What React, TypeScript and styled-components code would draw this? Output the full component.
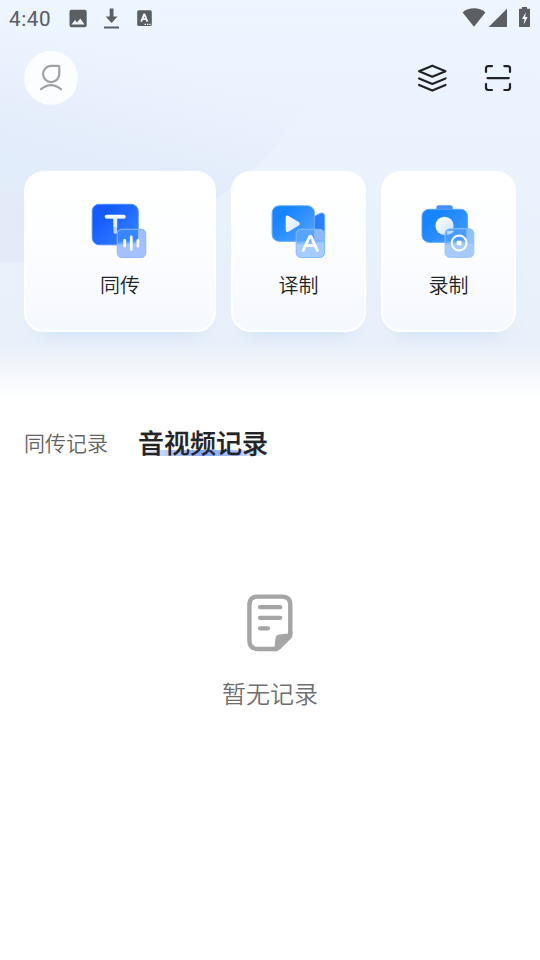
import React from 'react';
import styled, { createGlobalStyle } from 'styled-components';

const GlobalStyle = createGlobalStyle`
  * { box-sizing: border-box; }
  body { margin: 0; background: #fff; }
  svg { display: block; flex: none; }
`;

const Screen = styled.div`
  width: 540px;
  height: 960px;
  position: relative;
  isolation: isolate;
  overflow: hidden;
  display: flex;
  flex-direction: column;
  background: linear-gradient(#edf5ff 0, #ebf3fe 100px, #e9f1fb 250px, #e9f0fa 343px, #f0f4fa 362px, #f9fbfe 382px, #fff 402px);
  font-family: 'Noto Sans CJK SC', sans-serif;
`;

const Backdrop = styled.svg`
  position: absolute;
  top: 0;
  left: 0;
  z-index: -1;
`;

const StatusBar = styled.div`
  height: 36px;
  display: flex;
  justify-content: space-between;
  color: #5b5f64;
`;

const Clock = styled.span`
  width: 60px;
  padding-left: 9px;
  font: 400 20.6px/38px Roboto, sans-serif;
  letter-spacing: 0.6px;
  -webkit-text-stroke: 0.12px currentColor;
`;

const StatusGroup = styled.div`
  display: flex;
`;

const Header = styled.header`
  height: 54px;
  margin-top: 15px;
  padding: 0 24px;
  display: flex;
  align-items: center;
  justify-content: space-between;
`;

const Avatar = styled.div`
  width: 54px;
  height: 54px;
  border-radius: 50%;
  background: rgba(255, 255, 255, 0.82);
`;

const HeaderActions = styled.div`
  display: flex;
  gap: 30px;
`;

const Cards = styled.div`
  display: grid;
  grid-template-columns: 192px 135px 135px;
  gap: 15px;
  margin: 66px 24px 0;
`;

const Card = styled.div`
  height: 161px;
  display: flex;
  flex-direction: column;
  align-items: center;
  padding-top: 24px;
  border: 2px solid #fff;
  border-radius: 20px;
  background: linear-gradient(#fff 0%, #fdfeff 38%, #f5f8fe 100%);
  box-shadow: 0 16px 18px -16px rgba(170, 203, 244, 0.55);
`;

const CardLabel = styled.span`
  margin-top: 2px;
  font-size: 20px;
  font-weight: 350;
  line-height: 28px;
  color: #222326;
`;

const Tabs = styled.nav`
  display: flex;
  height: 42px;
  margin: 89px 24px 0;
`;

const Tab = styled.span<{ $active?: boolean }>`
  height: 42px;
  line-height: 42px;
  font-size: ${p => (p.$active ? 26 : 21)}px;
  font-weight: ${p => (p.$active ? 500 : 350)};
  color: ${p => (p.$active ? '#222426' : '#666')};
  -webkit-text-stroke: ${p => (p.$active ? '0.25px currentColor' : '0')};
  margin-left: ${p => (p.$active ? 30 : 0)}px;
  background: ${p => p.$active
    ? 'linear-gradient(90deg, rgba(137,169,248,0) 0, #b9ccfa 22%, #84a6f8 50%, #a9c0f9 75%, rgba(137,169,248,0) 100%) 0 29px / 100% 6px no-repeat'
    : 'none'};
`;

const Empty = styled.div`
  display: flex;
  flex-direction: column;
  align-items: center;
  margin-top: 131px;
  gap: 23px;
  font-size: 24px;
  font-weight: 350;
  line-height: 36px;
  color: #6f6f6f;
`;

const BackdropArt = () => (
  <Backdrop width="540" height="400">
    <defs>
      <linearGradient id="orb" gradientUnits="userSpaceOnUse" x1="0" y1="20" x2="-58" y2="250">
        <stop offset="0" stopColor="#e9f1fe" stopOpacity="0" />
        <stop offset="0.12" stopColor="#e9f1fe" stopOpacity="0.6" />
        <stop offset="0.33" stopColor="#e6eefb" />
        <stop offset="0.5" stopColor="#e2ecfb" />
        <stop offset="0.65" stopColor="#e2edfa" />
        <stop offset="0.73" stopColor="#e4eaf7" />
        <stop offset="1" stopColor="#e4eaf8" />
      </linearGradient>
    </defs>
    <ellipse cx="8" cy="-30" rx="335" ry="292.5" fill="url(#orb)" />
  </Backdrop>
);

const NotificationIcons = () => (
  <svg width="110" height="36" viewBox="60.500 0 110 36" fill="currentColor">
    <path fillRule="evenodd" d="M72 9.8h13.2a2 2 0 0 1 2 2v13.4a2 2 0 0 1-2 2H72a2 2 0 0 1-2-2V11.800a2 2 0 0 1 2-2ZM72 24.500h13l-4.200-6-3.200 4-2.100-2.600Z" />
    <path d="M110.200 8.500h3.800v8h4l-5.900 6.600-5.900-6.600h4ZM104.500 26.600h15v2h-15Z" />
    <rect x="137.700" y="10.300" width="14.600" height="15.800" rx="1.600" />
    <path d="m141.700 21.600 3.100-7.800 3.100 7.800m-5-2.500h3.800" fill="none" stroke="#f3f8ff" strokeWidth="1.800" strokeLinejoin="bevel" />
    <path d="M145 24.400h6.500" stroke="#f3f8ff" strokeWidth="1.200" strokeDasharray="1.400 1" />
  </svg>
);

const SystemIcons = () => (
  <svg width="80" height="36" viewBox="460 0 80 36" fill="currentColor">
    <path d="M462.600 12.500C468.500 6.900 479.600 6.900 485.400 12.500L474 26.700Z" />
    <path d="M507 8.700V27h-18.300Z" />
    <path d="M522 7h5v1.700h2.500c.3 0 .5.200.5.500v17.100c0 .4-.3.700-.7.700h-9.600c-.4 0-.7-.3-.7-.7V9.200c0-.3.200-.5.500-.5h2.500Z" />
    <path d="M526 12.200 522 19h2.500l-.9 5.700 4-7.600h-2.500Z" fill="#f4f8ff" />
  </svg>
);

const PersonIcon = () => (
  <svg width="54" height="54" fill="none" stroke="#a1a1a3" strokeWidth="2.200" strokeLinecap="round" strokeLinejoin="round">
    <path d="M27 14.900h7q1.300 0 1.300 1.300v6.500a8.100 8.100 0 1 1-8.300-7.800ZM17.100 38.200q9.900-8.100 19.800 0" />
  </svg>
);

const StackIcon = () => (
  <svg width="36" height="36" fill="none" stroke="#202224" strokeWidth="2.200" strokeLinejoin="round" strokeLinecap="round">
    <path d="m18.300 5.700 13.200 5.500-13.200 5.500-13.200-5.500ZM5.100 18.400l13.200 5.500 13.200-5.500M5.100 24.900l13.200 5.700 13.200-5.700" />
  </svg>
);

const ScanIcon = () => (
  <svg width="36" height="36" fill="none" stroke="#202224" strokeWidth="2.200" strokeLinecap="round">
    <path d="M6 12V8.500q0-2.400 2.400-2.400H12M24.300 6.100h3.300q2.400 0 2.400 2.400V12M30 24v3.600q0 2.400-2.400 2.400h-3.300M12 30H8.400Q6 30 6 27.600V24M7.500 18.100h21.300" />
  </svg>
);

const IconPaints = ({ id, from, to, glass }: { id: string; from: string; to: string; glass: string }) => (
  <defs>
    <linearGradient id={`${id}-body`} x1="0.2" y1="0.3" x2="1" y2="1">
      <stop stopColor={from} /><stop offset="1" stopColor={to} />
    </linearGradient>
    <linearGradient id={`${id}-white`} x2="1" y2="1">
      <stop stopColor="#fff" /><stop offset="1" stopColor="#cfe2ff" />
    </linearGradient>
    <linearGradient id={`${id}-glass`} x1="0.42" y1="0" x2="0.5" y2="1">
      <stop stopColor={to} /><stop offset="0.38" stopColor={to} stopOpacity="0.9" />
      <stop offset="0.54" stopColor={glass} /><stop offset="1" stopColor={glass} />
    </linearGradient>
  </defs>
);

const InterpretIcon = () => (
  <svg width="66" height="72" viewBox="87.300 197.200 66 72">
    <IconPaints id="interpret" from="#145bff" to="#3787ff" glass="#a4c0fe" />
    <rect x="92.500" y="204.500" width="46" height="40.500" rx="7" fill="url(#interpret-body)" stroke="#4d8cff" />
    <path d="M107 217.100h17M115.600 217.500v14.700" stroke="#b9d3ff" strokeWidth="3.700" strokeLinecap="round" fill="none" />
    <path d="M106.800 216.800h17.300" stroke="#f7faff" strokeWidth="3.500" strokeLinecap="round" />
    <path d="M115.600 217v10" stroke="#e2edff" strokeWidth="3.700" />
    <rect x="117.500" y="229.500" width="28.600" height="28.200" rx="4.500" fill="url(#interpret-glass)" />
    <path d="M138.400 230h3.200a4.500 4.500 0 0 1 4.500 4.500v12h-7.700Z" fill="#9fbffe" />
    <rect x="117.500" y="229.500" width="28.600" height="28.200" rx="4.500" fill="none" stroke="#94b8ff" />
    <path d="M125 240.600v5.800M131.600 237.200v12.600M138.200 240.600v5.800" stroke="#f8fbff" strokeWidth="2.800" strokeLinecap="round" />
  </svg>
);

const TranslateVideoIcon = () => (
  <svg width="66" height="72" viewBox="266.300 197.200 66 72">
    <IconPaints id="video" from="#1684ff" to="#5aa4ff" glass="#a5cbff" />
    <path d="m311 218.500 9.500-5q4.500-1.300 4.500 3.500v22h-14Z" fill="#287ff7" stroke="#69aaff" />
    <rect x="272.400" y="206" width="42.300" height="35.500" rx="7" fill="url(#video-body)" stroke="#63abff" />
    <path d="M289.700 216.600Q286 214.200 286 218v12q0 3.600 3.700 1.500l9.300-5.700q2.400-1.800 0-3.600Z" fill="url(#video-white)" />
    <rect x="296.500" y="229.500" width="28.300" height="28.200" rx="4.500" fill="url(#video-glass)" />
    <path d="M314.500 230h5.800a4.500 4.500 0 0 1 4.500 4.500v6h-10.300Z" fill="#88baff" />
    <rect x="296.500" y="229.500" width="28.300" height="28.200" rx="4.500" fill="none" stroke="#85bbff" />
    <path d="m303.500 250.700 6.200-13.500q.9-1.500 1.800 0l6.200 13.500M306.300 245.700h8.700" fill="none" stroke="#fafcff" strokeWidth="2.900" strokeLinecap="round" strokeLinejoin="round" />
  </svg>
);

const RecordIcon = () => (
  <svg width="66" height="72" viewBox="416.200 197.200 66 72">
    <IconPaints id="record" from="#1684ff" to="#4a9cff" glass="#a5cbff" />
    <path d="M436.500 211v-3q0-2.500 2.500-2.500h11.500q2.500 0 2.500 2.500v3Z" fill="#488eff" />
    <rect x="422.200" y="209.500" width="45.500" height="33" rx="7" fill="url(#record-body)" stroke="#5aa6ff" />
    <circle cx="444.700" cy="226" r="9.100" fill="url(#record-white)" />
    <rect x="445.300" y="229" width="28.700" height="28.500" rx="4.500" fill="url(#record-glass)" />
    <path d="M466.500 229.500h3a4.500 4.500 0 0 1 4.500 4.500v10h-7.500Z" fill="#91c0ff" />
    <path d="M447 231h7q-1 3-7 4Z" fill="#bddaff" />
    <rect x="445.300" y="229" width="28.700" height="28.500" rx="4.500" fill="none" stroke="#93c2ff" />
    <circle cx="459.300" cy="243.200" r="7.400" fill="none" stroke="#fff" strokeWidth="2" />
    <rect x="456.900" y="241" width="4.800" height="4.500" rx="1" fill="#fff" />
  </svg>
);

const DocumentIcon = () => (
  <svg width="46" height="58">
    <path d="M43.300 40V11q0-8.400-8.400-8.400H10.800Q2.400 2.600 2.400 11v35.600q0 8.400 8.400 8.400h19" fill="none" stroke="#a5a5a5" strokeWidth="4.400" />
    <path d="M45.500 37v4q0 2.200-1.600 3.800L32.900 55.500q-1.800 1.700-4.300 1.700H27.200l1.200-12.500q.3-3.600 3.900-4.100l8.800-1.100V37Z" fill="#a5a5a5" />
    <path d="M13 13.200h20.200M13 23.800h20.200M13 34.300h8" stroke="#a5a5a5" strokeWidth="4.300" strokeLinecap="round" />
  </svg>
);

export default function App() {
  return (
    <Screen>
      <GlobalStyle />
      <BackdropArt />
      <StatusBar>
        <StatusGroup><Clock>4:40</Clock><NotificationIcons /></StatusGroup>
        <SystemIcons />
      </StatusBar>
      <Header>
        <Avatar><PersonIcon /></Avatar>
        <HeaderActions><StackIcon /><ScanIcon /></HeaderActions>
      </Header>
      <Cards>
        <Card><InterpretIcon /><CardLabel>同传</CardLabel></Card>
        <Card><TranslateVideoIcon /><CardLabel>译制</CardLabel></Card>
        <Card><RecordIcon /><CardLabel>录制</CardLabel></Card>
      </Cards>
      <Tabs>
        <Tab>同传记录</Tab>
        <Tab $active>音视频记录</Tab>
      </Tabs>
      <Empty><DocumentIcon /><span>暂无记录</span></Empty>
    </Screen>
  );
}
